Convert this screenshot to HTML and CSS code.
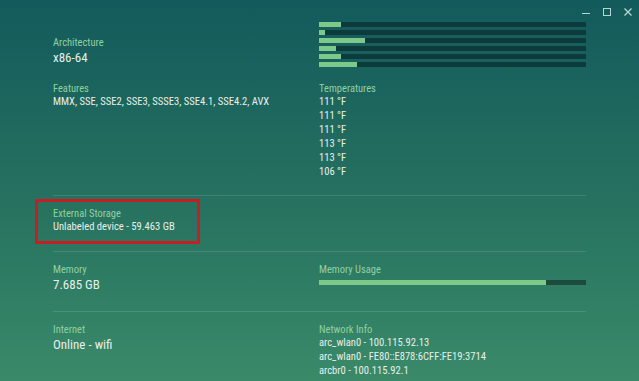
FILE: index.html
```html
<!DOCTYPE html>
<html lang="en">
<head>
  <meta charset="UTF-8" />
  <meta name="viewport" content="width=device-width, initial-scale=1.0"/>
  <title>system info</title>
  <link rel="stylesheet" href="styles.css">
</head>
<body>
  <div class="window">
    <div class="titlebar">
      <span class="ctl ctl-min"></span>
      <span class="ctl ctl-max"></span>
      <svg class="ctl-close" width="8" height="8" viewBox="0 0 8 8">
        <path d="M0.5 0.5 L7.5 7.5 M7.5 0.5 L0.5 7.5" stroke="#b9d6d4" stroke-width="1.3"/>
      </svg>
    </div>

    <div class="grid">
      <div class="cell arch">
        <div class="label">Architecture</div>
        <div class="value big">x86-64</div>
      </div>
      <div class="cell cpu">
        <div class="bar"><div class="fill" style="width: 22px"></div></div>
        <div class="bar"><div class="fill" style="width: 6px"></div></div>
        <div class="bar"><div class="fill" style="width: 46px"></div></div>
        <div class="bar"><div class="fill" style="width: 17px"></div></div>
        <div class="bar"><div class="fill" style="width: 22px"></div></div>
        <div class="bar"><div class="fill" style="width: 38px"></div></div>
      </div>

      <div class="cell features">
        <div class="label">Features</div>
        <div class="value">MMX, SSE, SSE2, SSE3, SSSE3, SSE4.1, SSE4.2, AVX</div>
      </div>
      <div class="cell features">
        <div class="label">Temperatures</div>
        <div class="value">111 °F</div>
        <div class="value">111 °F</div>
        <div class="value">111 °F</div>
        <div class="value">113 °F</div>
        <div class="value">113 °F</div>
        <div class="value">106 °F</div>
      </div>

      <div class="divider"></div>

      <div class="cell section storage">
        <div class="label">External Storage</div>
        <div class="value">Unlabeled device - 59.463 GB</div>
      </div>
      <div class="cell section"></div>

      <div class="divider"></div>

      <div class="cell section">
        <div class="label">Memory</div>
        <div class="value big">7.685 GB</div>
      </div>
      <div class="cell section">
        <div class="label">Memory Usage</div>
        <div class="membar"><div class="memfill" style="width: 227px"></div></div>
      </div>

      <div class="divider"></div>

      <div class="cell section">
        <div class="label">Internet</div>
        <div class="value big">Online - wifi</div>
      </div>
      <div class="cell section">
        <div class="label">Network Info</div>
        <div class="value">arc_wlan0 - 100.115.92.13</div>
        <div class="value">arc_wlan0 - FE80::E878:6CFF:FE19:3714</div>
        <div class="value">arcbr0 - 100.115.92.1</div>
      </div>
    </div>
  </div>
</body>
</html>
```

FILE: styles.css
```css
body {
  margin: 0;
  font-family: "Roboto Condensed", "DejaVu Sans Condensed", Roboto, sans-serif;
  font-stretch: condensed;
}
.window {
  width: 639px;
  height: 381px;
  overflow: hidden;
  background: linear-gradient(180deg, #135a5c 0%, #25705f 50%, #3a8a69 100%);
  color: #e6efe9;
}
.titlebar {
  height: 22px;
  display: flex;
  justify-content: flex-end;
  align-items: flex-start;
  gap: 13px;
  padding-right: 7px;
  box-sizing: border-box;
}
.ctl {
  display: block;
  width: 8px;
  height: 8px;
  margin-top: 8px;
  box-sizing: border-box;
}
.ctl-min {
  border-bottom: 1.5px solid #b9d6d4;
  margin-top: 6px;
}
.ctl-max {
  border: 1.5px solid #b9d6d4;
}
.ctl-close {
  margin-top: 8px;
}
.grid {
  display: grid;
  grid-template-columns: 266px 267px;
  margin-left: 53px;
}
.label {
  font-size: 10.5px;
  line-height: 13px;
  color: #8fd1a0;
}
.value {
  font-size: 10.6px;
  line-height: 14px;
}
.value.big {
  font-size: 13px;
  line-height: 18px;
}
.arch {
  padding-top: 14px;
}
.cpu {
  display: flex;
  flex-direction: column;
  gap: 3px;
}
.bar {
  height: 5px;
  background: #0d3a3b;
}
.fill {
  height: 100%;
  background: #7cc98a;
}
.features {
  padding-top: 15px;
  padding-bottom: 16px;
}
.divider {
  grid-column: 1 / -1;
  height: 1px;
  background: rgba(255, 255, 255, 0.12);
}
.section {
  padding: 11px 0 17px;
}
.storage {
  position: relative;
}
.storage::before {
  content: "";
  position: absolute;
  left: -18px;
  top: 3px;
  width: 165px;
  height: 45px;
  border: 3px solid #c41f25;
  box-sizing: border-box;
}
.membar {
  margin-top: 4px;
  height: 5px;
  background: #1c4a3d;
}
.memfill {
  height: 100%;
  background: #7cc98a;
}
```
